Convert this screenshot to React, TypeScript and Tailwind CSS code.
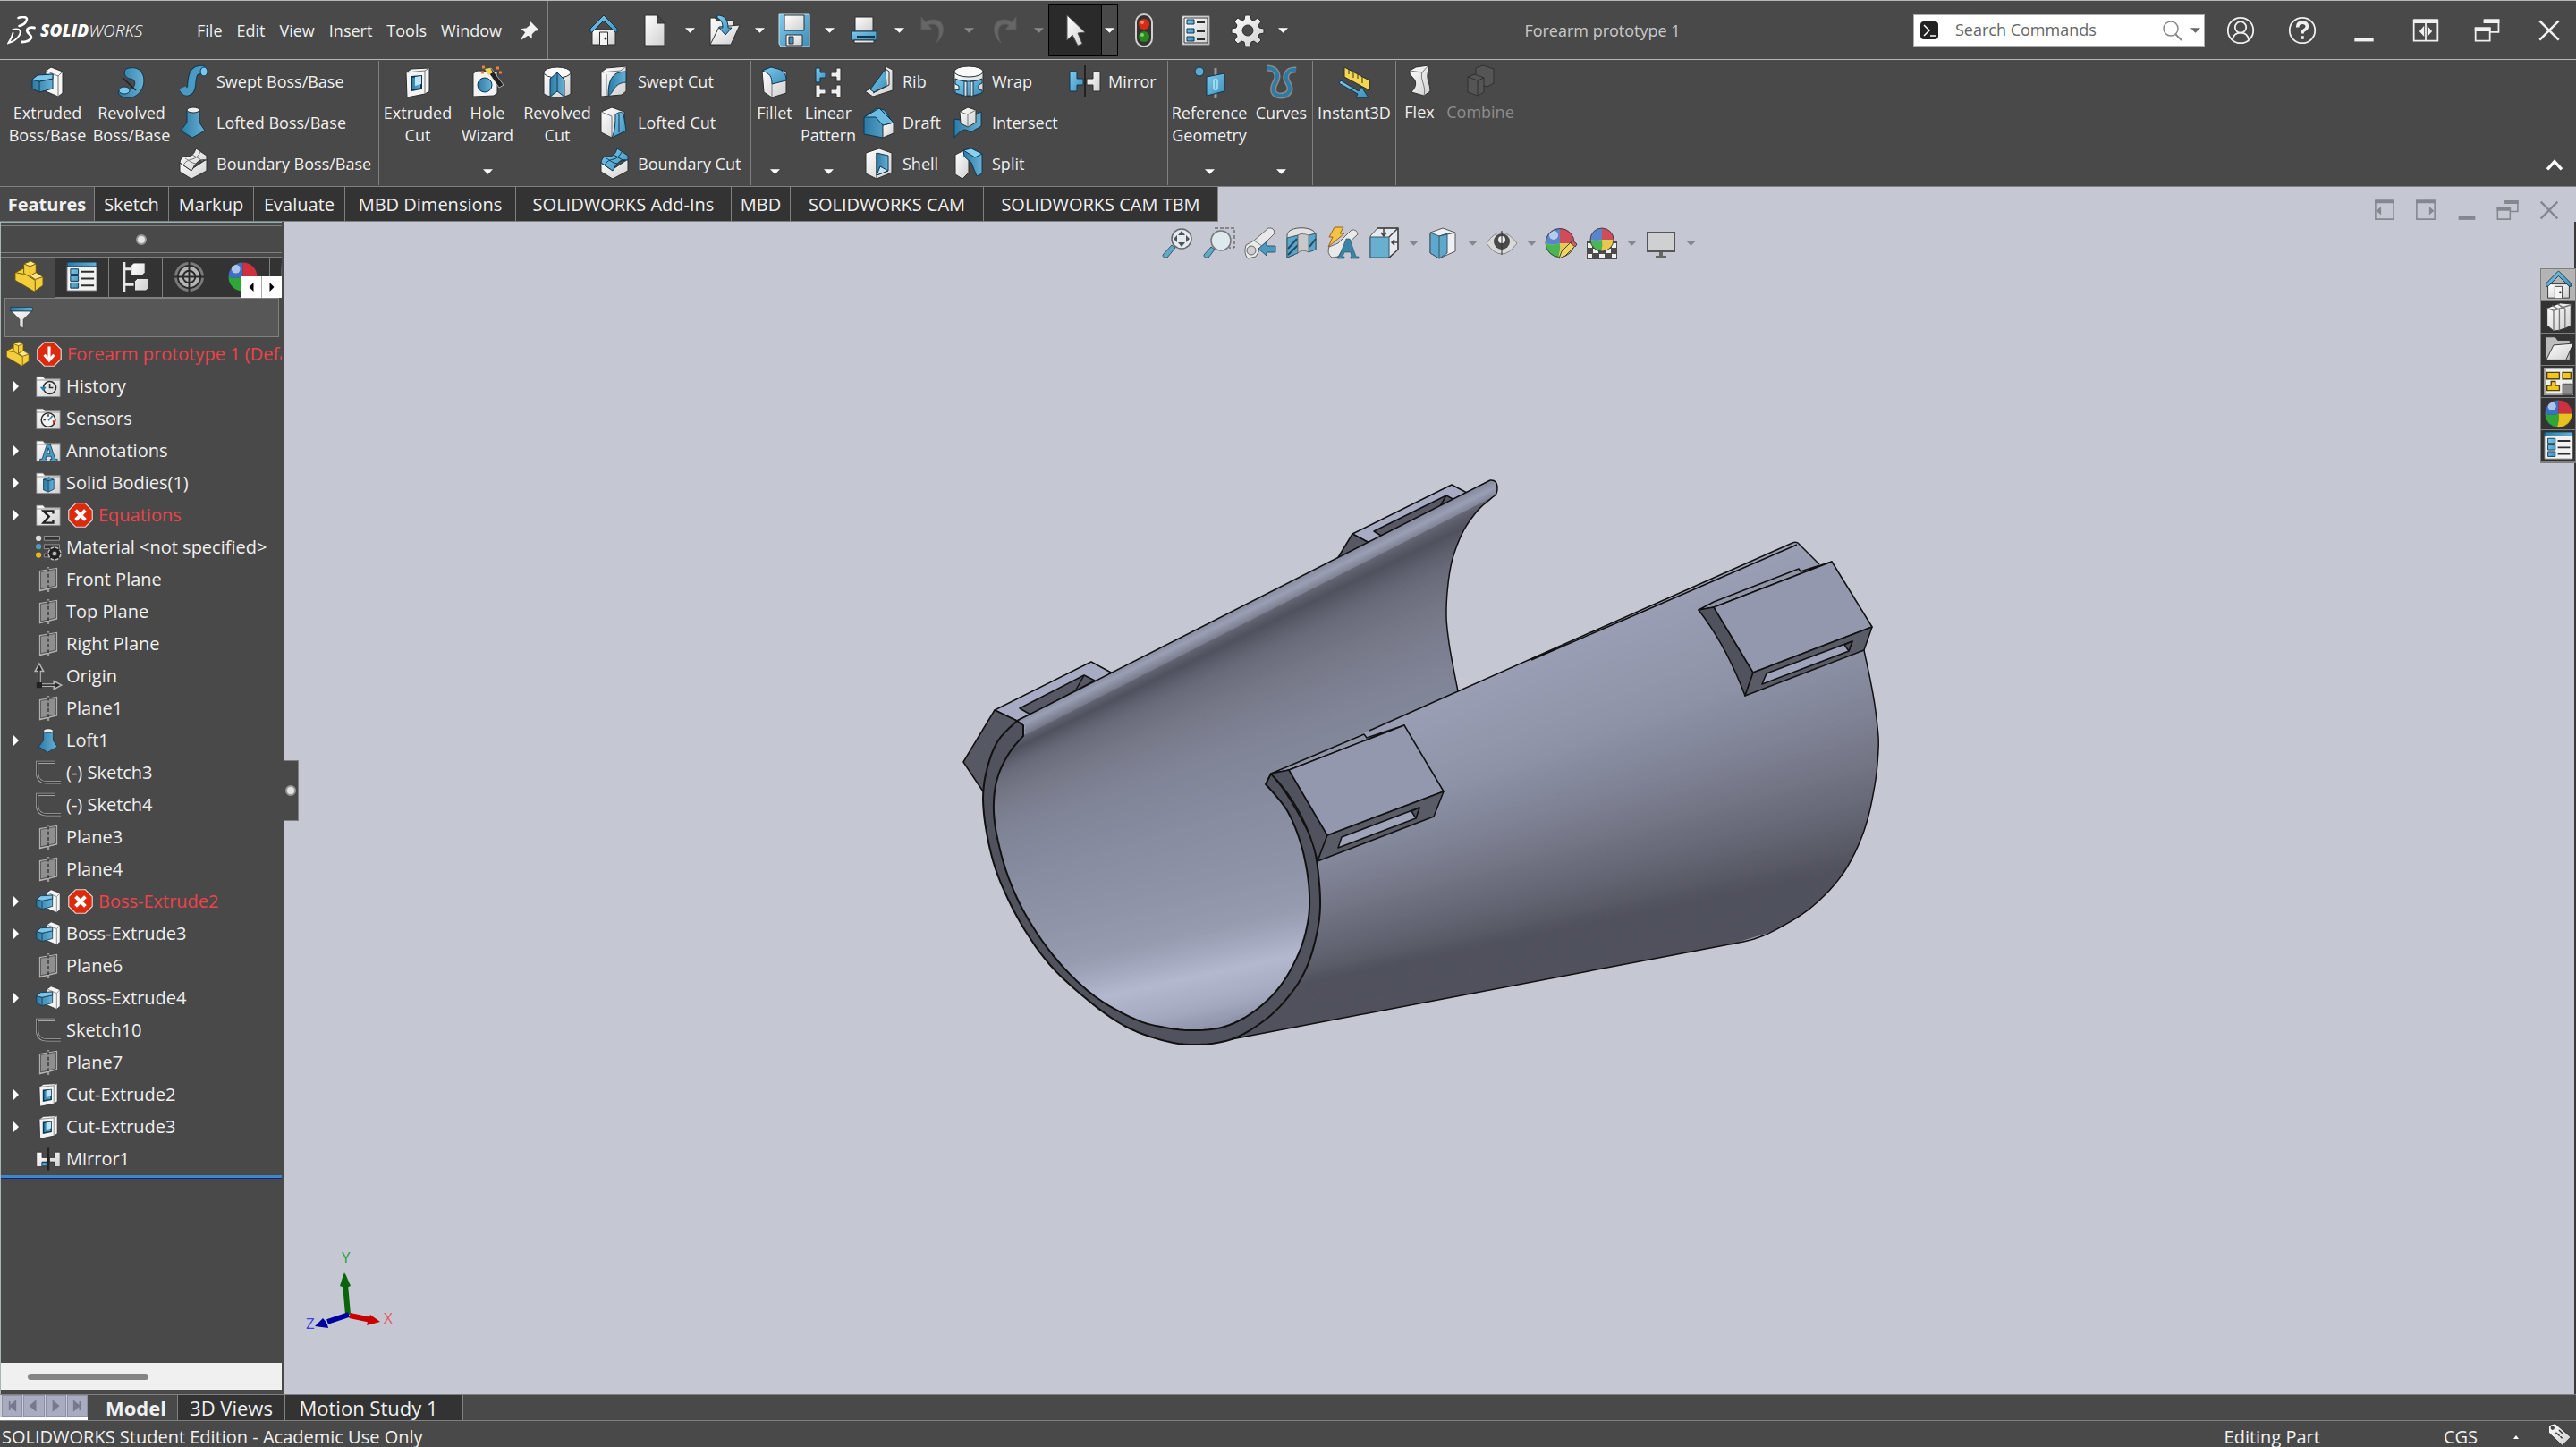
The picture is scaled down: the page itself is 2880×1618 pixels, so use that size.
import React, { ReactNode } from "react";

/* ---------- icon drawings, all on a 36 x 36 grid ---------- */

const W = "url(#white)";
const B = "url(#blue)";
const BD = "url(#blueDeep)";
const NAVY = "#0e3650";
const INK = "#2e2e2e";

const art: Record<string, ReactNode> = {
  home: (
    <>
      <path d="M5 17h26v17H5z" fill={W} stroke={INK} />
      <path d="M18 1 33 16v4h-2L18 7 5 20H3v-4z" fill={B} stroke={NAVY} />
      <path d="M13.500 34V20h9v14" fill="#f4f4f4" stroke={INK} />
      <circle cx="20" cy="27" r="1.500" fill={INK} />
    </>
  ),
  newDoc: <path d="M7 1h14l8 9v25H7zM21 1v9h8" fill={W} stroke={INK} />,
  open: (
    <>
      <path d="M2 4h5l3 3h18v8L16 34H2z" fill={W} stroke={INK} />
      <path d="m12 14 23-2-10 22H2z" fill={W} stroke={INK} />
      <path d="M10 1c8 0 12 5 12 14h4l-7 8-7-8h4c0-6-2-9-6-11z" fill={B} stroke={NAVY} />
    </>
  ),
  save: (
    <>
      <path d="M1 0h34v36H3l-2-3z" fill={B} stroke="#c9dde8" />
      <path d="M7 1h22v17H7z" fill={W} stroke={INK} />
      <path d="M9 23h18v12H9z" fill={W} stroke={INK} />
      <path d="M12 25h5v8h-5z" fill={BD} stroke={INK} />
    </>
  ),
  print: (
    <>
      <path d="M8 3h20v16H8z" fill={W} stroke={INK} />
      <path d="M4 19h28v10H4z" fill={B} stroke={NAVY} />
      <path d="M10 24h20v3H10z" fill={NAVY} />
      <path d="M7 29h22v3H7z" fill={W} stroke={INK} />
    </>
  ),
  undo: <path d="M4 3v14h12l-4-5c10-4 16 5 9 20 12-11 9-27-4-26-4 0-6 1-8 3z" fill="#666" stroke="#5a5a5a" />,
  redo: <path d="M32 3v14H20l4-5c-10-4-16 5-9 20C3 21 6 5 19 6c4 0 6 1 8 3z" fill="#666" stroke="#5a5a5a" />,
  cursor: <path d="M9 1 9 29l6-6 6 12 5-2-5-12 8-1z" fill={W} stroke="#555" />,
  traffic: (
    <>
      <rect x="9" y="0" width="18" height="36" rx="9" fill="#333" stroke="#d0d0d0" strokeWidth="2" />
      <circle cx="18" cy="11" r="6" fill="#d92a12" />
      <circle cx="16" cy="9" r="2" fill="#ff8a70" />
      <circle cx="18" cy="25" r="6" fill="#27881c" />
      <circle cx="16" cy="23" r="2" fill="#7ad36c" />
    </>
  ),
  options: (
    <>
      <path d="M3 2h30v32H3z" fill={W} stroke="#aaa" />
      <path d="M5 4h26v28H5z" fill="none" stroke={INK} />
      <path d="M8 6h8v5H8zM8 16h8v5H8zM8 25h8v5H8z" fill={B} stroke={NAVY} />
      <path d="M19 9h9M19 19h9M19 28h9" stroke={INK} strokeWidth="2" />
    </>
  ),
  gear: (
    <>
      <path
        d="M15 1h6l1 5 3 1 4-3 4 4-3 4 1 3 5 1v5l-5 1-1 3 3 4-4 4-4-3-3 1-1 5h-6l-1-5-3-1-4 3-4-4 3-4-1-3-5-1v-5l5-1 1-3-3-4 4-4 4 3 3-1z"
        fill={W}
        stroke={INK}
      />
      <circle cx="18" cy="18" r="6" fill="#494949" stroke={INK} />
    </>
  ),
  pin: <path d="m20 5 12 12-5 1-6 6 0 6-5-5L4 33l8-12-6-5 7-1 6-5z" fill="#f2f2f2" stroke="#f2f2f2" strokeWidth="2" />,
  extrude: (
    <>
      <path d="m16 5 6-4 13 5v24l-5 4-14-6z" fill="#f5f5f5" stroke={INK} />
      <path d="m16 5 14 6v23M30 11l5-5" fill="none" stroke="#777" />
      <path d="m1 15 6-5 17-1v16L9 29l-8-4z" fill={BD} stroke={NAVY} />
      <path d="m1 15 8 2v12M9 17l15-3" fill="none" stroke={NAVY} />
      <path d="m1 15 6-5 17-1v5L9 17z" fill="#7cc6ea" stroke={NAVY} />
    </>
  ),
  revolve: (
    <>
      <path d="M12 3c22-8 27 22 9 31-7 3-17 1-18-5 2-4 9-6 14-3 7-4 6-12-1-12-5-1-8-7-4-11z" fill={BD} stroke={NAVY} />
      <ellipse cx="10" cy="27" rx="6" ry="4" fill="#7cc6ea" stroke={NAVY} />
      <path d="m8 13 15 14" stroke="#222" strokeWidth="1.500" />
    </>
  ),
  sweep: (
    <>
      <path d="M7 26c3 6 8 4 9-3 1-10 1-20 14-18" fill="none" stroke={NAVY} strokeWidth="10" />
      <path d="M6 25c3 7 9 6 10-2 1-10 1-20 14-18" fill="none" stroke="#4a9ac2" strokeWidth="8" />
      <ellipse cx="30" cy="7" rx="4" ry="5" fill="#7cc6ea" stroke={NAVY} />
    </>
  ),
  loft: (
    <>
      <path d="M11 4v14L4 27l13 8 14-8-6-9V4z" fill={BD} stroke={NAVY} />
      <ellipse cx="18" cy="4" rx="7" ry="3" fill="#eee" stroke={INK} />
    </>
  ),
  boundary: (
    <>
      <path d="m3 17 12 8 18-12v13L16 35 3 27z" fill={W} stroke={INK} />
      <path d="M3 17c1-7 5-7 8-7 6 0 8-3 10-9l12 8v5c-8-1-10 2-12 4-3 3-3 6-5 8z" fill={W} stroke={INK} />
      <path d="M9 12c4 2 6 5 12 6M17 8l12 7M7 20c2-5 6-6 10-7 4-1 7-4 9-8" fill="none" stroke="#777" />
    </>
  ),
  boundaryCut: (
    <>
      <path d="m3 17 12 8 18-12v13L16 35 3 27z" fill={W} stroke={INK} />
      <path d="M3 17c1-7 5-7 8-7 6 0 8-3 10-9l12 8v5c-8-1-10 2-12 4-3 3-3 6-5 8z" fill={B} stroke={NAVY} />
      <path d="M9 12c4 2 6 5 12 6M17 8l12 7M7 20c2-5 6-6 10-7 4-1 7-4 9-8" fill="none" stroke={NAVY} />
    </>
  ),
  cutExtrude: (
    <>
      <path d="m5 7 6-4 20-1v26l-5 3-20 4z" fill="#f4f4f4" stroke={INK} />
      <path d="m5 7 21-2v26M26 5l5-3" fill="none" stroke="#777" />
      <path d="m11 12 11-1v14l-11 2z" fill={BD} stroke={NAVY} strokeWidth="2" />
      <path d="m15 12 7-1v9l-7 2z" fill="#bfe4f5" />
    </>
  ),
  holeWizard: (
    <>
      <path d="m2 8 5-3 22 1v24l-4 3-23 1z" fill="#f4f4f4" stroke={INK} />
      <circle cx="15" cy="21" r="8" fill={BD} stroke={NAVY} />
      <path d="m17 4 5-2 14 19-5 3z" fill="#222" stroke="#ddd" strokeWidth=".7" />
      <path d="m15 3 6-1 3 5-5 3z" fill="#f3d34b" />
      <path d="M12 1h3M28 2h3M31 7h3M11 7h3" stroke="#f0803c" strokeWidth="3" />
    </>
  ),
  revolvedCut: (
    <>
      <path d="M3 6v25c7 5 23 5 30 0V6z" fill={W} stroke={INK} />
      <ellipse cx="18" cy="7" rx="15" ry="6" fill="#fafafa" stroke={INK} />
      <path d="m18 7 8 8v19l-8-6-8 6V14z" fill={BD} stroke={NAVY} />
      <path d="M18 7v21" stroke={NAVY} />
    </>
  ),
  sweptCut: (
    <>
      <path d="m3 8 6-5 22-2v28l-5 4-23 2z" fill={W} stroke={INK} />
      <path d="M3 8l22-2 6-5M9 10v24" fill="none" stroke="#777" />
      <path d="M31 7C17 7 11 14 11 34c7-3 5-14 20-15z" fill={BD} stroke={NAVY} />
    </>
  ),
  loftedCut: (
    <>
      <path d="m3 6 12-5 14 5v22L15 35 3 29z" fill={W} stroke={INK} />
      <path d="m3 6 12 5v24" fill="none" stroke="#777" />
      <path d="M19 9c4-3 7-3 9-1l3 19-16 8c4-8 4-18 4-26z" fill={B} stroke={NAVY} />
      <path d="M23 8v21" stroke={NAVY} />
    </>
  ),
  fillet: (
    <>
      <path d="m4 5 10-4 17 5v24l-16 5-9-6z" fill={W} stroke={INK} />
      <path d="m4 5 10-4 8 2c6 2 9 6 9 13l-16 4c0-8-2-12-11-15z" fill={B} stroke={NAVY} />
      <path d="M15 20v15" stroke="#777" />
    </>
  ),
  linear: (
    <>
      <path d="M4 2h5v5h6v6H9v5H4z" fill={B} stroke={NAVY} />
      <path d="M32 2h-5v5h-6v5h6v5h5zM4 21h5v5h6v5H9v4H4zM32 21h-5v5h-6v5h6v4h5z" fill="#f0f0f0" stroke={INK} />
    </>
  ),
  rib: (
    <>
      <path d="m25 1 8 4v23L11 35l-9-6 20-9z" fill={W} stroke={INK} />
      <path d="m25 4-17 23 4 3 14-7z" fill={B} stroke={NAVY} />
      <path d="m25 4 4 3v15L11 31" fill="none" stroke={INK} />
    </>
  ),
  draft: (
    <>
      <path d="m1 12 14-10 9 2 10 16v10l-12 5L1 31z" fill={BD} stroke={NAVY} />
      <path d="m22 21 12-3v12l-12 5z" fill={W} stroke={INK} />
      <path d="m1 12 17-10 16 16-12 3-8-9z" fill="#6dbbe0" stroke={NAVY} />
    </>
  ),
  shell: (
    <>
      <path d="m3 6 15-5 14 5v22l-17 7-12-6z" fill={W} stroke={INK} />
      <path d="m15 6 13 3v17l-13 5z" fill={BD} stroke={NAVY} />
      <path d="m15 31 4-10 9 5z" fill="#bfe4f5" stroke={NAVY} />
      <path d="M15 6v29" stroke={INK} />
    </>
  ),
  wrap: (
    <>
      <path d="M2 6v24c6 6 26 6 32 0V6z" fill={W} stroke={INK} />
      <ellipse cx="18" cy="7" rx="16" ry="6" fill="#fafafa" stroke={INK} />
      <path d="M3 15c8 4 22 4 30 0v5l-4 2v5l4 1v3l-10 3V18h-3v16h-4V18h-3v16L3 31v-4l4 1v-5l-4-2z" fill={B} stroke={NAVY} />
    </>
  ),
  intersect: (
    <>
      <path d="m2 14 12 2 18-10v16L20 29c-6-6-12-2-18 6z" fill={BD} stroke={NAVY} />
      <path d="m8 6 9-5 9 3v14l-9 5-8-4z" fill={W} stroke={INK} />
      <path d="m8 6 9 3v14M17 9l9-5" fill="none" stroke="#777" />
    </>
  ),
  split: (
    <>
      <path d="m3 8 10-5 5 2v23l-7 7-8-5z" fill={W} stroke={INK} />
      <path d="m12 3 9-2 12 6v22l-6 3-6-15-8-7z" fill={BD} stroke={NAVY} />
      <path d="m12 3 9-2 12 6-8 4z" fill="#8bd0ee" stroke={NAVY} />
    </>
  ),
  mirror: (
    <>
      <path d="M1 7h8v8h7v7H9v7H1z" fill={B} stroke={NAVY} />
      <path d="M35 7h-8v8h-7v7h7v7h8z" fill={W} stroke={INK} />
      <path d="M18 0v36" stroke="#222" strokeWidth="2" />
    </>
  ),
  mirrorTree: (
    <>
      <path d="M1 8h8v8h7v6H9v7H1zM35 8h-8v8h-7v6h7v7h8z" fill={W} stroke={INK} />
      <path d="M9 23h7v5H9z" fill={B} stroke={NAVY} />
      <path d="M18 2v32" stroke="#222" strokeWidth="3" />
    </>
  ),
  refGeo: (
    <>
      <path d="M25 2v34" stroke="#999" strokeWidth="3" />
      <circle cx="7" cy="6" r="5" fill="#5fa9cc" stroke={NAVY} />
      <path d="m15 12 20-4v20l-20 5z" fill={B} stroke={NAVY} />
      <path d="M23 15h4v11h-4z" fill="#5fb4da" stroke="#dff" />
    </>
  ),
  curves: (
    <>
      <path d="M2 2c9 0 14 7 9 16s-2 15 6 15 13-6 8-14-1-16 9-15" fill="none" stroke="#8a8a8a" strokeWidth="7" />
      <path d="M2 2c9 0 14 7 9 16s-2 15 6 15 13-6 8-14-1-16 9-15" fill="none" stroke="#2b7ba6" strokeWidth="4" />
    </>
  ),
  instant3d: (
    <>
      <path d="m7 1 28 15v11L7 12z" fill="#f6d84e" stroke={INK} />
      <path d="M12 4v5M17 6v7M22 9v5M27 12v7" stroke={INK} />
      <path d="m3 16 20 12 3-5 8 12-14 0 2-4L1 19z" fill={B} stroke={NAVY} />
    </>
  ),
  flex: (
    <>
      <path d="M7 6 14 2 28 0c1 6-3 10 0 18 1 4 2 7 2 11l-7 5L9 30c3-4 6-7 4-13C11 13 6 11 7 6z" fill={W} stroke={INK} />
      <path d="m7 6 14 2 7-8M21 8c-3 8 5 15 2 26" fill="none" stroke="#777" />
    </>
  ),
  combine: (
    <g fill="#555" stroke="#303030">
      <path d="m13 3 8-3 12 4v16l-7 4-13-4z" />
      <path d="m4 13 8-3 10 4v16l-7 4-11-4zM4 13l11 4v17M15 17l7-3" />
    </g>
  ),
  zoomFit: (
    <>
      <path d="m1 31 10-11 4 3L6 34q-5 1-5-3z" fill="#64a8c8" stroke="#35566a" />
      <circle cx="22" cy="13" r="11" fill="#e3ebf1" stroke="#666" strokeWidth="1.500" />
      <path d="m22 4 4 5h-8zM22 22l4-5h-8zM13 13l4-4v8zM31 13l-4-4v8z" fill="#4d5357" />
    </>
  ),
  zoomArea: (
    <>
      <path d="M13 1h22v22h-6" fill="none" stroke="#444" strokeDasharray="4 2" />
      <path d="m1 31 8-9 4 3-7 9q-5 1-5-3z" fill="#64a8c8" stroke="#35566a" />
      <circle cx="20" cy="15" r="11" fill="#dde8ef" stroke="#777" strokeWidth="1.500" />
    </>
  ),
  prevView: (
    <>
      <path d="m2 20 9-5L27 1q7-1 7 6L20 21l-7 12-9 2q-5-6-2-15z" fill="#e9e9e9" stroke="#666" />
      <path d="m11 15 9 6" stroke="#888" />
      <circle cx="8" cy="26" r="5" fill="#cfcfcf" stroke="#666" />
      <path d="m16 24 9-8v5h10v7H25v4z" fill="#4a9ac2" stroke="#35566a" />
    </>
  ),
  section: (
    <>
      <path d="M2 9C2-2 34-2 34 9v16l-8 2V12q-8-8-16 0v19l-8 3z" fill="#e2e2e2" stroke="#555" />
      <path d="m2 12 12-3v20L2 34zM26 9l8-2v18l-8 3z" fill="#5aa6ca" stroke="#35566a" />
      <path d="m3 24 10-11M3 31l11-11M27 22l7-9" stroke="#1f4a63" strokeWidth="2" />
      <path d="M14 9q4-3 12 0v19q-7-4-12 1z" fill="#c9c9c9" stroke="#777" />
    </>
  ),
  dynamic: (
    <>
      <path d="m3 22 10-4L28 3q6-1 7 5L20 22l-7 11-7 1q-6-5-3-12z" fill="#e9e9e9" stroke="#666" />
      <path d="M9 0h10l-4 7h5L2 22l5-11H3z" fill="#f3c441" stroke="#9a5f1f" />
      <path d="M22 13h4l7 20h3v2h-9v-2h1l-1-5h-7l-2 5h2v2h-8v-2h2z" fill="#3c83a8" stroke="#1f4a63" strokeWidth=".6" />
    </>
  ),
  orient: (
    <>
      <path d="m3 10 8-9h23v24l-9 9H3z" fill="#e6e9ee" stroke="#555" />
      <path d="M3 11h21v23H3z" fill="#69afd0" stroke="#35566a" />
      <path d="m24 11 10-10M24 34l10-9V1H11M18 1v8m-3-3 3 4 3-4M34 17h-7m3-3-3 3 3 3" fill="none" stroke="#444" strokeWidth="1.500" />
    </>
  ),
  display: (
    <>
      <path d="m4 6 14-5 14 5v21l-18 8L4 29z" fill="#edf1f4" stroke="#555" />
      <path d="m4 6 10 4 9-3v22l-9 6-10-6z" fill="#5fa8cb" stroke="#35566a" />
      <path d="M14 10v25M14 10l18-4" stroke="#35566a" />
    </>
  ),
  eye: (
    <>
      <path d="M1 18q16-24 34 0-17 24-34 0z" fill="#d9d9d9" stroke="#888" />
      <circle cx="18" cy="16" r="9" fill="#4a4a4a" />
      <circle cx="18" cy="14" r="4" fill="#ececec" />
      <path d="M18 4v27" stroke="#333" />
    </>
  ),
  ball: (
    <>
      <path d="M18 18V1A17 17 0 0 0 1 18q8 3 17 0z" fill="#3f6fc4" />
      <path d="M18 18V1a17 17 0 0 1 17 17z" fill="#cf3040" />
      <path d="M18 18q-9 3-17 0a17 17 0 0 0 15 17q3-8 2-17z" fill="#2fa63a" />
      <path d="M18 18h17a17 17 0 0 1-19 17q3-8 2-17z" fill="#e6c11f" />
      <circle cx="10" cy="9" r="5" fill="#dfeaf8" opacity=".7" />
      <circle cx="18" cy="18" r="17" fill="none" stroke="#333" />
    </>
  ),
  ballPencil: (
    <>
      <path d="M17 18V1A16 16 0 0 0 1 18q8 3 16 0z" fill="#5a84cc" />
      <path d="M17 18V1a16 16 0 0 1 16 17z" fill="#d04c5a" />
      <path d="M17 18q-9 3-16 0a16 16 0 0 0 14 16q3-8 2-16z" fill="#4ab653" />
      <path d="M17 18h16a16 16 0 0 1-18 16q3-8 2-16z" fill="#e6c94f" />
      <circle cx="10" cy="9" r="5" fill="#dfeaf8" opacity=".7" />
      <circle cx="17" cy="17.500" r="16" fill="none" stroke="#444" />
      <path d="m16 35 3-8 12-12 5 4-13 13z" fill="#efd660" stroke="#444" />
      <path d="m31 15 5 4-2 3-5-4z" fill="#d9606a" stroke="#444" />
    </>
  ),
  scene: (
    <>
      <path d="M1 16h34v20H1z" fill="#4c4c4c" />
      <path d="M2 18h5v5H2zM8 24h6v5H8zM2 30h5v5H2zM15 30h6v5h-6zM22 24h6v5h-6zM29 18h5v5h-5zM29 30h5v5h-5z" fill="#f0f0f0" />
      <path d="M18 14V1A13 13 0 0 0 5 14q6 2 13 0z" fill="#5a84cc" />
      <path d="M18 14V1a13 13 0 0 1 13 13z" fill="#d04c5a" />
      <path d="M18 14q-7 2-13 0a13 13 0 0 0 12 13q2-6 1-13z" fill="#4ab653" />
      <path d="M18 14h13a13 13 0 0 1-14 13q2-6 1-13z" fill="#e6c94f" />
      <circle cx="18" cy="14" r="13" fill="none" stroke="#444" />
    </>
  ),
  monitor: (
    <>
      <path d="M3 6h30v21H3z" fill="#cfd0d2" stroke="#555" strokeWidth="2" />
      <path d="M16 28h4v4h4v2H12v-2h4z" fill="#666" />
    </>
  ),
  part: (
    <>
      <path d="m3 13 10-5V3l8-3 6 3v10l8 5v10l-10 7L3 22z" fill="#f2cf3a" stroke="#6a5310" />
      <path d="m13 3 7 3 7-3-6-3zM20 6v11l6 4 9-3-8-5-7 4" fill="#fbe884" stroke="#6a5310" />
      <path d="m3 13 10-5v6l13 8v13M3 13l10 2" fill="none" stroke="#6a5310" />
    </>
  ),
  props: (
    <>
      <path d="M1 2h34v32H1z" fill="#f2f2f2" stroke="#777" />
      <path d="M1 1h34v5H1z" fill={BD} stroke={NAVY} />
      <path d="M5 9h9v6H5zM5 17h9v6H5zM5 25h9v6H5z" fill={B} stroke={NAVY} />
      <path d="M17 12h15M17 20h15M17 28h15" stroke={INK} strokeWidth="2" />
    </>
  ),
  config: (
    <>
      <path d="M5 1v34M5 9h8M5 27h11" stroke="#e8e8e8" strokeWidth="3" />
      <path d="m13 5 3-3h13v11l-3 3H13zM17 23l3-3h13v11l-3 3H17z" fill={W} stroke={INK} />
    </>
  ),
  target: (
    <>
      <circle cx="18" cy="18" r="17" fill="#999" opacity=".7" />
      <circle cx="18" cy="18" r="13" fill="#b5b5b5" stroke="#2a2a2a" strokeWidth="2" />
      <circle cx="18" cy="18" r="7" fill="none" stroke="#2a2a2a" strokeWidth="2" />
      <path d="M18 0v36M0 18h36" stroke="#2a2a2a" strokeWidth="2" />
    </>
  ),
  filter: (
    <>
      <path d="M2 8h32L21 21v14l-6-4V21z" fill={W} stroke={INK} />
      <path d="M1 2h34v6H1z" fill={BD} stroke={NAVY} />
    </>
  ),
  folder: <path d="M1 4h9l3 3h22v26H1zM1 9h34" fill={W} stroke="#777" />,
  material: (
    <>
      <path d="M12 2h22v6H12zM12 14h22v6H12zM12 27h12v5H12z" fill="#333" stroke="#aaa" />
      <circle cx="4" cy="5" r="4" fill="#ddd" />
      <circle cx="4" cy="17" r="4" fill="#4a9ac2" />
      <circle cx="4" cy="29" r="4" fill="#e6b81f" />
      <circle cx="27" cy="27" r="7" fill="none" stroke="#bbb" strokeWidth="6" />
      <circle cx="27" cy="27" r="6" fill="none" stroke="#222" strokeWidth="4" />
      <path d="M27 17v20M17 27h20M20 20l14 14M34 20 20 34" stroke="#222" strokeWidth="2" />
      <circle cx="27" cy="27" r="3" fill="#bbb" />
    </>
  ),
  plane: (
    <>
      <path d="M18 0v36" stroke="#999" strokeWidth="3" />
      <path d="m6 6 24-4v26L6 34z" fill="#8f8f8f" stroke="#b5b5b5" strokeWidth="2" />
      <path d="m7 7 22-4v24L7 32z" fill="none" stroke="#444" />
      <path d="M18 2v32" stroke="#222" strokeDasharray="5 3" strokeWidth="1.500" />
    </>
  ),
  origin: (
    <>
      <path d="M5 31V9M5 31h22" stroke="#b5b5b5" strokeWidth="5" />
      <path d="m5 0 6 11H-1zM37 31l-11-6v12z" fill="#2a2a2a" stroke="#b5b5b5" strokeWidth="2" />
      <path d="M5 31V9M5 31h22" stroke="#333" strokeWidth="2" />
      <path d="M1 27h8v8H1z" fill="#222" />
    </>
  ),
  sketch: (
    <>
      <path d="M28 3H2v16q1 13 14 13h20" fill="none" stroke="#a5a5a5" strokeWidth="4" />
      <path d="M28 3H2v16q1 13 14 13h20" fill="none" stroke="#3c3c3c" strokeWidth="2" />
    </>
  ),
  error: (
    <>
      <path d="M11 1h14l10 10v14L25 35H11L1 25V11z" fill="#dd2a0c" stroke="#d8d8d8" strokeWidth="1.500" />
      <path d="m11 11 14 14M25 11 11 25" stroke="#fff" strokeWidth="5" />
    </>
  ),
  errorDown: (
    <>
      <path d="M11 1h14l10 10v14L25 35H11L1 25V11z" fill="#dd2a0c" stroke="#d8d8d8" strokeWidth="1.500" />
      <path d="M18 7v19m-7-7 7 8 7-8" fill="none" stroke="#fff" strokeWidth="4" />
    </>
  ),
  books: (
    <>
      <path d="m4 7 16-6 13 1v27l-8 3-6 2-7 1-8-7z" fill={W} stroke={INK} />
      <path d="M12 10v25M19 9v25M26 8v24M4 7l8 3 21-7M10 4l9 5M17 2l9 6" fill="none" stroke="#777" strokeWidth="1.500" />
    </>
  ),
  folderOpen: (
    <>
      <path d="M2 3h12l3 4h15v24H2z" fill="#bdbdbd" stroke={INK} />
      <path d="m12 13 24-2-9 20H3z" fill={W} stroke={INK} />
    </>
  ),
  palette: (
    <>
      <path d="M1 2h34v32H1z" fill="#efefef" stroke="#999" strokeWidth="2" />
      <path d="M4 7h15v8H4zM23 7h10v8H23zM4 29v-6h5v-5h5v5h5v6z" fill="#f2c61e" stroke="#54420a" strokeWidth="1.500" />
      <path d="M23 21h12v13H23z" fill="#8c8c8c" stroke="#444" />
    </>
  ),
  tag: (
    <>
      <path d="M2 4 12 1l24 21-13 13L2 15z" fill={W} stroke="#222" />
      <path d="m13 15 6 5M18 11l7 7M23 24l-3-3" stroke="#333" strokeWidth="2" />
      <circle cx="8" cy="8" r="3" fill="#444" />
    </>
  ),
  user: (
    <g fill="none" stroke="#f0f0f0" strokeWidth="2">
      <circle cx="18" cy="18" r="16" />
      <circle cx="18" cy="14" r="7" />
      <path d="M8 30q1-9 10-9t10 9" />
    </g>
  ),
  help: (
    <g fill="none" stroke="#f0f0f0">
      <circle cx="18" cy="18" r="16" strokeWidth="2" />
      <path d="M12 14q0-6 6-6t6 5q0 3-4 5-2 1-2 4" strokeWidth="4" />
      <path d="M16 25h4v4h-4z" fill="#f0f0f0" strokeWidth="0" />
    </g>
  ),
  minimize: <path d="M6 27h24v5H6z" fill="currentColor" />,
  span: (
    <>
      <path d="M3 5h30v26H3zM18 8v23" fill="none" stroke="currentColor" strokeWidth="2" />
      <path d="M3 4h30v5H3zM16 12v14l-6-7zM20 12v14l6-7z" fill="currentColor" />
    </>
  ),
  restore: (
    <>
      <path d="M14 5h18v15H22M3 15h18v16H3z" fill="none" stroke="currentColor" strokeWidth="2" />
      <path d="M13 4h20v5H13zM2 14h20v5H2z" fill="currentColor" />
    </>
  ),
  close: <path d="M6 6l24 24M30 6 6 30" stroke="currentColor" strokeWidth="3" />,
  dockLeft: (
    <>
      <path d="M5 5h26v26H5z" fill="none" stroke="currentColor" strokeWidth="2" />
      <path d="M4 3h28v5H4zM13 13v12l-7-6z" fill="currentColor" />
    </>
  ),
  dockRight: (
    <>
      <path d="M5 5h26v26H5z" fill="none" stroke="currentColor" strokeWidth="2" />
      <path d="M4 3h28v5H4zM23 13v12l7-6z" fill="currentColor" />
    </>
  ),
  chevronUp: <path d="m6 26 12-13 12 13" fill="none" stroke="#fff" strokeWidth="5" />,
  clock: (
    <>
      <circle cx="20" cy="20" r="9" fill="none" stroke={INK} strokeWidth="2" />
      <path d="M20 14v6h5" fill="none" stroke={INK} strokeWidth="2" />
      <path d="M6 19h9l-4 6z" fill="#2b7ba6" />
    </>
  ),
  gauge: (
    <>
      <circle cx="18" cy="20" r="10" fill="#f4f4f4" stroke={INK} strokeWidth="2" />
      <path d="m18 21 6-7" stroke="#2b7ba6" strokeWidth="2" />
      <path d="M24 21h4l-3 6z" fill="#d92a12" />
      <path d="M11 20h3M18 12v3" stroke={INK} strokeWidth="2" />
    </>
  ),
  letterA: <path d="M16 9h5l7 21h3v3H21v-3h2l-1-4h-7l-1 4h2v3H6v-3h3zM16 22h5l-3-8z" fill="#4a9ac2" stroke={NAVY} />,
  cube: (
    <>
      <path d="m11 13 8-3 7 3v14l-8 4-7-3z" fill={BD} stroke={NAVY} />
      <path d="m11 13 7 2v16M18 15l8-2" fill="none" stroke={NAVY} />
    </>
  ),
  sigma: <path d="M25 16v-4H11l8 8-8 9h14v-4" fill="none" stroke="#222" strokeWidth="3" />,
};

const folderBadge: Record<string, string> = {
  history: "clock",
  sensors: "gauge",
  annotations: "letterA",
  bodies: "cube",
  equations: "sigma",
};

function Icon({ name, className = "size-9" }: { name: string; className?: string }) {
  const badge = folderBadge[name];
  return (
    <svg viewBox="0 0 36 36" className={`shrink-0 overflow-visible ${className}`} aria-hidden="true">
      {badge ? (
        <>
          {art.folder}
          {art[badge]}
        </>
      ) : (
        art[name]
      )}
    </svg>
  );
}

function SharedPaint() {
  return (
    <svg className="absolute size-0" aria-hidden="true">
      <defs>
        <linearGradient id="white" x1="0" y1="0" x2="1" y2="1">
          <stop offset="0" stopColor="#ffffff" />
          <stop offset="1" stopColor="#cfcfcf" />
        </linearGradient>
        <linearGradient id="blue" x1="0" y1="0" x2="1" y2="1">
          <stop offset="0" stopColor="#82cbee" />
          <stop offset="1" stopColor="#3c8fb9" />
        </linearGradient>
        <linearGradient id="blueDeep" x1="0" y1="0" x2="1" y2="0">
          <stop offset="0" stopColor="#2c7ba5" />
          <stop offset="1" stopColor="#68b0d4" />
        </linearGradient>
      </defs>
    </svg>
  );
}

function Caret({ className = "text-white" }: { className?: string }) {
  return (
    <svg viewBox="0 0 12 6" className={`h-[6px] w-[11px] shrink-0 ${className}`} aria-hidden="true">
      <path d="M0 0h12L6 6z" fill="currentColor" />
    </svg>
  );
}

/* ---------- title bar ---------- */

function Logo() {
  return (
    <div className="flex w-[220px] shrink-0 items-center pl-2 text-white">
      <svg viewBox="0 0 31 32" className="h-8 w-8" aria-hidden="true">
        <g fill="none" stroke="#fff" strokeLinecap="round">
          <path d="M12 2c6-2 11-1 9 3-1 3-4 5-8 6" strokeWidth="2.500" />
          <path d="M6 15c9-2 10 3 6 8-3 4-7 6-11 7 2-3 4-7 5-11" strokeWidth="2" />
          <path d="M30 13c-6-1-9 1-8 4s6 5 4 8-6 4-10 4" strokeWidth="2.800" />
        </g>
      </svg>
      <span className="ml-[5px] font-['Open_Sans'] text-[19px] italic leading-6">
        <b className="font-extrabold">SOLID</b>
        <span className="font-light">WORKS</span>
      </span>
    </div>
  );
}

const quick = [
  { name: "newDoc", label: "New" },
  { name: "open", label: "Open" },
  { name: "save", label: "Save" },
  { name: "print", label: "Print" },
  { name: "undo", label: "Undo", off: true },
  { name: "redo", label: "Redo", off: true },
];

function TitleBar() {
  return (
    <header className="flex h-[67px] shrink-0 items-center border-y border-[#b5b8b8]">
      <div className="flex h-full w-[613px] shrink-0 items-center border-r border-[#808080]">
        <Logo />
        <nav className="flex gap-4 pt-0.5 text-[18px]">
          {["File", "Edit", "View", "Insert", "Tools", "Window"].map((m) => (
            <button key={m}>{m}</button>
          ))}
        </nav>
        <button aria-label="Pin menu" className="mr-2 ml-auto">
          <Icon name="pin" className="size-6" />
        </button>
      </div>
      <div className="ml-[33px] flex h-full shrink-0 items-center">
        <button aria-label="Home" className="flex w-[58px] justify-center">
          <Icon name="home" />
        </button>
        {quick.map((q) => (
          <div key={q.name} className="flex w-[78px] items-center">
            <button aria-label={q.label} disabled={q.off} className="flex w-14 justify-center">
              <Icon name={q.name} />
            </button>
            <button aria-label={`${q.label} options`} disabled={q.off} className="flex w-[22px] justify-center">
              <Caret className={q.off ? "text-[#8a8a8a]" : "text-white"} />
            </button>
          </div>
        ))}
        <div className="flex h-[58px] w-[78px] border border-black bg-[#2a2a2a]">
          <button aria-label="Select" className="flex w-[58px] items-center justify-center">
            <Icon name="cursor" />
          </button>
          <button aria-label="Select options" className="flex flex-1 items-center justify-center border-l border-black bg-[#494949]">
            <Caret />
          </button>
        </div>
        {["traffic", "options", "gear"].map((n) => (
          <button key={n} aria-label={n} className="flex w-[58px] justify-center">
            <Icon name={n} />
          </button>
        ))}
        <button aria-label="Settings menu" className="flex w-5 justify-center">
          <Caret />
        </button>
      </div>
      <h1 className="min-w-0 flex-1 truncate pt-0.5 text-center text-[18px] text-[#c8c8c8]">Forearm prototype 1</h1>
      <label className="flex h-9 w-[326px] shrink-0 items-center border border-[#aaa] bg-white">
        <span className="mx-[7px] flex h-5 w-5 items-center justify-center rounded-sm bg-[#222]">
          <svg viewBox="0 0 20 20" className="size-5" aria-hidden="true">
            <path d="m4 4 6 6-6 6M11 16h6" fill="none" stroke="#fff" strokeWidth="1.500" />
          </svg>
        </span>
        <input
          aria-label="Search Commands"
          placeholder="Search Commands"
          className="ml-3 min-w-0 flex-1 bg-transparent text-[18px] text-[#444] outline-none placeholder:text-[#666]"
        />
        <svg viewBox="0 0 24 24" className="size-6" aria-hidden="true">
          <circle cx="10" cy="10" r="8" fill="none" stroke="#888" strokeWidth="1.500" />
          <path d="m15 16 7 7" stroke="#888" strokeWidth="2" />
        </svg>
        <span className="mr-1 ml-2">
          <Caret className="text-[#666]" />
        </span>
      </label>
      <div className="flex shrink-0 gap-[37px] pr-3.5 pl-6">
        {["user", "help", "minimize", "span", "restore", "close"].map((n) => (
          <button key={n} aria-label={n}>
            <Icon name={n} className="size-8" />
          </button>
        ))}
      </div>
    </header>
  );
}

/* ---------- ribbon ---------- */

function Big({ icon, lines, width, menu, off }: { icon: string; lines: string[]; width: string; menu?: boolean; off?: boolean }) {
  return (
    <button disabled={off} className={`flex shrink-0 flex-col items-center pt-1.5 pb-3 ${width} ${off ? "text-[#8d8d8d]" : ""}`}>
      <Icon name={icon} />
      <span className="mt-1 text-[18px] leading-[25px] whitespace-nowrap">
        {lines.map((l) => (
          <span key={l} className="block">
            {l}
          </span>
        ))}
      </span>
      {menu && (
        <span className="mt-auto">
          <Caret />
        </span>
      )}
    </button>
  );
}

function Stack({ items, width }: { items: [string, string][]; width: string }) {
  return (
    <div className={`flex shrink-0 flex-col ${width}`}>
      {items.map(([icon, label]) => (
        <button key={label} className="flex h-[46px] items-center gap-2 text-[18px] whitespace-nowrap">
          <Icon name={icon} />
          {label}
        </button>
      ))}
    </div>
  );
}

function Group({ children, width }: { children: ReactNode; width: string }) {
  return <div className={`my-px flex shrink-0 border-r border-[#808080] ${width}`}>{children}</div>;
}

function Ribbon() {
  return (
    <section aria-label="Features commands" className="flex h-[142px] shrink-0 border-b border-[#808080]">
      <Group width="w-[424px] pl-1.5">
        <Big icon="extrude" lines={["Extruded", "Boss/Base"]} width="w-[94px]" />
        <Big icon="revolve" lines={["Revolved", "Boss/Base"]} width="w-[94px]" />
        <Stack
          width="ml-1"
          items={[
            ["sweep", "Swept Boss/Base"],
            ["loft", "Lofted Boss/Base"],
            ["boundary", "Boundary Boss/Base"],
          ]}
        />
      </Group>
      <Group width="w-[416px] pl-1">
        <Big icon="cutExtrude" lines={["Extruded", "Cut"]} width="w-[78px]" />
        <Big icon="holeWizard" lines={["Hole", "Wizard"]} width="w-[78px]" menu />
        <Big icon="revolvedCut" lines={["Revolved", "Cut"]} width="w-[78px]" />
        <Stack
          width="ml-[7px]"
          items={[
            ["sweptCut", "Swept Cut"],
            ["loftedCut", "Lofted Cut"],
            ["boundaryCut", "Boundary Cut"],
          ]}
        />
      </Group>
      <Group width="w-[466px] pl-px">
        <Big icon="fillet" lines={["Fillet"]} width="w-[50px]" menu />
        <Big icon="linear" lines={["Linear", "Pattern"]} width="w-[70px]" menu />
        <Stack
          width="ml-1 w-[100px]"
          items={[
            ["rib", "Rib"],
            ["draft", "Draft"],
            ["shell", "Shell"],
          ]}
        />
        <Stack
          width="w-[130px]"
          items={[
            ["wrap", "Wrap"],
            ["intersect", "Intersect"],
            ["split", "Split"],
          ]}
        />
        <Stack width="" items={[["mirror", "Mirror"]]} />
      </Group>
      <Group width="w-[162px]">
        <Big icon="refGeo" lines={["Reference", "Geometry"]} width="w-[92px]" menu />
        <Big icon="curves" lines={["Curves"]} width="w-[69px]" menu />
      </Group>
      <Group width="w-[93px]">
        <Big icon="instant3d" lines={["Instant3D"]} width="w-[92px]" />
      </Group>
      <div className="flex">
        <Big icon="flex" lines={["Flex"]} width="w-[52px]" />
        <Big icon="combine" lines={["Combine"]} width="w-[84px]" off />
      </div>
      <button aria-label="Collapse ribbon" className="mr-3 mb-3 ml-auto self-end">
        <Icon name="chevronUp" className="size-6" />
      </button>
    </section>
  );
}

const tabs: [string, string][] = [
  ["Features", "w-[106px]"],
  ["Sketch", "w-[83px]"],
  ["Markup", "w-[95px]"],
  ["Evaluate", "w-[102px]"],
  ["MBD Dimensions", "w-[191px]"],
  ["SOLIDWORKS Add-Ins", "w-[241px]"],
  ["MBD", "w-[66px]"],
  ["SOLIDWORKS CAM", "w-[216px]"],
  ["SOLIDWORKS CAM TBM", "w-[262px]"],
];

function RibbonTabs() {
  return (
    <div className="flex h-[39px] shrink-0 items-stretch bg-[#c5c8d3]">
      <div role="tablist" className="flex">
        {tabs.map(([t, w], i) => (
          <button
            key={t}
            role="tab"
            aria-selected={i === 0}
            className={`border-r border-b border-[#808080] pt-0.5 text-[20px] whitespace-nowrap ${w} ${i === 0 ? "bg-[#494949] font-bold" : "bg-[#333]"}`}
          >
            {t}
          </button>
        ))}
      </div>
      <div className="ml-auto flex items-center gap-[18px] pt-3 pr-4 text-[#85878f]">
        {["dockLeft", "dockRight", "minimize", "restore", "close"].map((n) => (
          <button key={n} aria-label={`Document ${n}`}>
            <Icon name={n} className="size-7" />
          </button>
        ))}
      </div>
    </div>
  );
}

/* ---------- feature tree ---------- */

type Row = { icon: string; text: string; open?: boolean; error?: boolean };

const rows: Row[] = [
  { icon: "history", text: "History", open: true },
  { icon: "sensors", text: "Sensors" },
  { icon: "annotations", text: "Annotations", open: true },
  { icon: "bodies", text: "Solid Bodies(1)", open: true },
  { icon: "equations", text: "Equations", open: true, error: true },
  { icon: "material", text: "Material <not specified>" },
  { icon: "plane", text: "Front Plane" },
  { icon: "plane", text: "Top Plane" },
  { icon: "plane", text: "Right Plane" },
  { icon: "origin", text: "Origin" },
  { icon: "plane", text: "Plane1" },
  { icon: "loft", text: "Loft1", open: true },
  { icon: "sketch", text: "(-) Sketch3" },
  { icon: "sketch", text: "(-) Sketch4" },
  { icon: "plane", text: "Plane3" },
  { icon: "plane", text: "Plane4" },
  { icon: "extrude", text: "Boss-Extrude2", open: true, error: true },
  { icon: "extrude", text: "Boss-Extrude3", open: true },
  { icon: "plane", text: "Plane6" },
  { icon: "extrude", text: "Boss-Extrude4", open: true },
  { icon: "sketch", text: "Sketch10" },
  { icon: "plane", text: "Plane7" },
  { icon: "cutExtrude", text: "Cut-Extrude2", open: true },
  { icon: "cutExtrude", text: "Cut-Extrude3", open: true },
  { icon: "mirrorTree", text: "Mirror1" },
];

function FeatureTree() {
  return (
    <ul className="text-[20px] whitespace-nowrap">
      <li className="flex h-9 items-center overflow-hidden text-[#f0424a]">
        <Icon name="part" className="ml-1 size-7" />
        <Icon name="errorDown" className="ml-2 size-7" />
        <span className="ml-1.5">Forearm prototype 1 (Default)</span>
      </li>
      {rows.map((r) => (
        <li key={r.text} className="flex h-9 items-center">
          <span className="flex w-[39px] shrink-0 pl-3.5">
            {r.open && (
              <button aria-label={`Expand ${r.text}`}>
                <svg viewBox="0 0 6 12" className="h-3 w-1.5" aria-hidden="true">
                  <path d="M0 0v12l6-6z" fill="#fff" />
                </svg>
              </button>
            )}
          </span>
          <Icon name={r.icon} className="size-7" />
          {r.error && <Icon name="error" className="ml-2 size-7" />}
          <span className={r.error ? "ml-1.5 text-[#f0424a]" : "ml-1.5"}>{r.text}</span>
        </li>
      ))}
    </ul>
  );
}

function Knob() {
  return <span className="block size-3 rounded-full border-2 border-[#999] bg-[#e4e4e4]" />;
}

function SidePanel() {
  return (
    <aside className="relative z-10 flex w-[318px] shrink-0 flex-col border-r border-l border-r-[#808080] border-l-[#a9b3b3] pr-0.5">
      <div className="border-t border-[#8fb0b0] pt-[3px]">
        <div className="flex h-[31px] items-center justify-center border-y border-[#808080]">
          <Knob />
        </div>
      </div>
      <div role="tablist" className="relative mt-1 flex h-[46px] shrink-0 overflow-hidden border-t border-[#808080]">
        {["part", "props", "config", "target", "ball", "props"].map((n, i) => (
          <button
            key={i}
            role="tab"
            aria-label={`Manager ${i + 1}`}
            className={`flex shrink-0 items-center justify-center border-r border-[#808080] pb-0.5 ${i ? "w-[60px] border-b bg-[#333]" : "w-[61px]"}`}
          >
            <Icon name={n} className="size-[35px]" />
          </button>
        ))}
        <div className="absolute right-0 bottom-0 flex h-6 bg-white text-black">
          {["M6 0v12L0 6z", "M0 0v12l6-6z"].map((d) => (
            <button key={d} aria-label="Scroll managers" className="flex w-[23px] items-center justify-center border-l border-[#aaa]">
              <svg viewBox="0 0 6 12" className="h-2.5 w-1.5" aria-hidden="true">
                <path d={d} fill="currentColor" />
              </svg>
            </button>
          ))}
        </div>
      </div>
      <label className="mr-[3px] ml-1 flex h-11 shrink-0 items-center border border-[#808080] bg-[#575757] pl-[5px]">
        <Icon name="filter" className="size-[26px]" />
        <input aria-label="Filter tree" className="ml-2 min-w-0 flex-1 bg-transparent outline-none" />
      </label>
      <div className="min-h-0 flex-1 overflow-hidden pt-px">
        <FeatureTree />
        <div className="h-1 border-b border-[#1a1a9c] bg-[#3a88c4]" />
      </div>
      <div className="flex h-[30px] shrink-0 items-center bg-[#f0f0f0] pl-[30px]">
        <span className="h-[7px] w-[135px] rounded-full bg-[#858585]" />
      </div>
      <div className="mt-0.5 h-[3px] shrink-0 border-t border-[#808080]" />
      <button
        aria-label="Collapse panel"
        className="absolute top-[602px] left-full flex h-[68px] w-[17px] items-center justify-center border border-l-0 border-[#808080] bg-[#494949]"
      >
        <Knob />
      </button>
    </aside>
  );
}

/* ---------- 3D model ---------- */

type P = [number, number];

function spline(pts: P[], steps: number): P[] {
  const out: P[] = [];
  for (let i = 0; i < pts.length - 1; i++) {
    const a = pts[Math.max(0, i - 1)];
    const b = pts[i];
    const c = pts[i + 1];
    const d = pts[Math.min(pts.length - 1, i + 2)];
    for (let s = 0; s < steps; s++) {
      const t = s / steps;
      const f = (k: 0 | 1) =>
        0.5 * (2 * b[k] + (c[k] - a[k]) * t + (2 * a[k] - 5 * b[k] + 4 * c[k] - d[k]) * t * t + (3 * b[k] - a[k] - 3 * c[k] + d[k]) * t * t * t);
      out.push([f(0), f(1)]);
    }
  }
  out.push(pts[pts.length - 1]);
  return out;
}

const str = (pts: P[]) => pts.map((p) => `${p[0].toFixed(1)},${p[1].toFixed(1)}`).join(" ");

function mix(a: string, b: string, t: number) {
  const n = [1, 3, 5].map((i) => {
    const x = parseInt(a.slice(i, i + 2), 16);
    const y = parseInt(b.slice(i, i + 2), 16);
    return Math.round(x + (y - x) * t);
  });
  return `rgb(${n.join(",")})`;
}

function Shaded({ data }: { data: [P, P, string][] }) {
  const steps = 12;
  const front = spline(data.map((d) => d[0]), steps);
  const back = spline(data.map((d) => d[1]), steps);
  return (
    <>
      {front.slice(0, -1).map((f, i) => {
        const seg = Math.floor(i / steps);
        const fill = mix(data[seg][2], data[seg + 1][2], (i % steps) / steps);
        return <polygon key={i} points={str([f, front[i + 1], back[i + 1], back[i]])} fill={fill} stroke={fill} strokeWidth="2" />;
      })}
    </>
  );
}

const innerFront: P[] = [
  [1144, 823], [1129, 841], [1116, 867], [1111, 897], [1114, 932], [1127, 980], [1149, 1027], [1183, 1075], [1224, 1114],
  [1270, 1140], [1303, 1149], [1334, 1152], [1369, 1148], [1402, 1131], [1431, 1103], [1452, 1066], [1462, 1032], [1464, 1001],
  [1460, 967], [1452, 936], [1440, 908], [1425, 888], [1415, 877],
];
const outerFront: P[] = [
  [1421, 865], [1436, 884], [1452, 910], [1465, 936], [1472, 962], [1476, 1006], [1473, 1040], [1462, 1079], [1444, 1110],
  [1415, 1140], [1377, 1162], [1336, 1168], [1299, 1163], [1257, 1147], [1216, 1118], [1174, 1079], [1141, 1032], [1116, 980],
  [1104, 936], [1099, 893], [1104, 858], [1116, 828], [1137, 806],
];
const innerBack: P[] = [[1670, 555], [1651, 572], [1634, 598], [1622, 633], [1617, 680], [1620, 719], [1630, 773]];
const outerBack: P[] = [
  [2084, 727], [2094, 776], [2099, 813], [2100, 838], [2096, 878], [2084, 929], [2061, 976], [2027, 1013], [1990, 1037], [1961, 1050], [1928, 1057],
];

const innerShade: [P, P, string][] = [
  [[1144, 823], [1670, 556], "#686a78"],
  [[1129, 841], [1640, 588], "#50525e"],
  [[1116, 867], [1622, 633], "#696b7a"],
  [[1111, 897], [1617, 685], "#777989"],
  [[1114, 932], [1626, 750], "#808496"],
  [[1127, 980], [1655, 825], "#878ca0"],
  [[1149, 1027], [1695, 895], "#8e92a7"],
  [[1183, 1075], [1740, 945], "#979bb0"],
  [[1205, 1098], [1765, 972], "#a5a9bf"],
  [[1228, 1116], [1785, 995], "#b4b8ce"],
  [[1270, 1140], [1830, 1020], "#a6aac1"],
  [[1303, 1149], [1860, 1032], "#999db4"],
  [[1334, 1152], [1895, 1042], "#9195aa"],
  [[1402, 1131], [1960, 1020], "#9195aa"],
];
const outerShade: [P, P, string][] = [
  [[1421, 865], [2006, 606], "#9b9fb5"],
  [[1436, 884], [2034, 634], "#979bb1"],
  [[1452, 910], [2060, 675], "#9397ac"],
  [[1465, 936], [2080, 717], "#8e92a7"],
  [[1472, 962], [2092, 762], "#85899c"],
  [[1476, 1006], [2100, 828], "#787a8b"],
  [[1473, 1040], [2096, 880], "#6b6d7c"],
  [[1462, 1079], [2084, 929], "#5d5f6b"],
  [[1450, 1102], [2064, 972], "#50525d"],
  [[1415, 1140], [2010, 1027], "#50525d"],
  [[1377, 1163], [1928, 1057], "#50525d"],
];

function Model() {
  const inner = spline(innerFront, 6);
  const outer = spline(outerFront, 6);
  const rearIn = spline(innerBack, 6);
  const rearOut = spline(outerBack, 6);
  const cavity: P[] = [[1144, 815], [1672, 552], ...rearIn, [1531, 817], [1421, 865], ...[...inner].reverse()];
  const cut = outer.findIndex((p) => p[0] === 1377 && p[1] === 1162) + 1;
  const shell: P[] = [[1531, 817], [1630, 773], [2004, 607], [2010, 607], [2033, 631], [2060, 660], ...rearOut, ...outer.slice(0, cut).reverse()];
  return (
    <svg viewBox="1070 520 1050 670" className="h-[670px] w-[1050px]" role="img" aria-label="Forearm prototype model">
      <defs>
        <clipPath id="cavity">
          <polygon points={str(cavity)} />
        </clipPath>
        <clipPath id="shell">
          <polygon points={str(shell)} />
        </clipPath>
        <linearGradient id="rim" gradientUnits="userSpaceOnUse" x1="1400" y1="672" x2="1409" y2="690">
          <stop offset="0" stopColor="#888ca0" />
          <stop offset=".4" stopColor="#9b9fb5" />
          <stop offset="1" stopColor="#757888" />
        </linearGradient>
      </defs>
      <g stroke="#111" strokeWidth="1.500" strokeLinejoin="round">
        <polygon points="1112,794 1220,740 1244,753 1137,806" fill="#a7abc4" />
        <polygon points="1140,792 1212,755 1224,761 1152,799" fill="#565865" />
        <path d="M1212 755 1202 773" />
        <polygon points="1512,597 1623,542 1640,551 1531,607" fill="#a7abc4" />
        <polygon points="1536,594 1617,554 1626,559 1544,599" fill="#565865" />
        <path d="M1617 554 1610 566" />
        <polygon points="1512,597 1495,625 1531,607" fill="#565864" />
        <polygon points="1112,794 1077,852 1099,885 1110,850 1137,806" fill="#565864" />
      </g>
      <g clipPath="url(#cavity)">
        <polygon points={str(cavity)} fill="#9195aa" />
        <Shaded data={innerShade} />
      </g>
      <path d="M1137 806 1666 537q8-1 8 9 0 7-4 9L1146 822q2-12-9-16z" fill="url(#rim)" />
      <path d="M1137 806 1666 537q8-1 8 9 0 7-4 9" fill="none" stroke="#111" strokeWidth="1.500" />
      <polyline points={str(rearIn)} fill="none" stroke="#111" strokeWidth="1.500" />
      <g clipPath="url(#shell)">
        <polygon points={str(shell)} fill="#9195aa" />
        <Shaded data={outerShade} />
      </g>
      <polygon points={str([...outer, [1144, 811], ...inner])} fill="#50525e" stroke="#111" strokeWidth="2" strokeLinejoin="round" />
      <g fill="none" stroke="#111" strokeWidth="1.500" strokeLinejoin="round">
        <path d="M1531 817 1630 773 2004 607q5-2 8 2l22 22M2009 609 1712 738M1377 1162 1928 1057" />
        <polyline points={str(rearOut)} />
      </g>
      <g stroke="#111" strokeWidth="1.500" strokeLinejoin="round">
        <polygon points="1421,865 1525,821 1528,825 1570,811 1441,861" fill="#9195aa" />
        <path d="M1421 865 1441 861 1484 934 1473 963Q1460 905 1421 865z" fill="#50525e" />
        <polygon points="1441,861 1570,811 1614,885 1484,934" fill="#9498ae" />
        <polygon points="1484,934 1614,885 1603,913 1473,963" fill="#595b67" />
        <polygon points="1500,936 1587,903 1583,915 1496,948" fill="#a0a4ba" />
        <polygon points="1578,907 1587,903 1583,915" fill="#50525e" />

        <polygon points="1899,682 1916,673 2011,636 2013,639 2048,628 1916,679" fill="#9195aa" />
        <path d="M1899 682 1916 679 1960 752 1951 778Q1930 722 1899 682z" fill="#50525e" />
        <polygon points="1916,679 2048,628 2093,701 1960,752" fill="#9498ae" />
        <polygon points="1960,752 2093,701 2084,727 1951,778" fill="#595b67" />
        <polygon points="1975,753 2071,717 2067,728 1970,765" fill="#a0a4ba" />
        <polygon points="2062,721 2071,717 2067,728" fill="#50525e" />
      </g>
    </svg>
  );
}

function Triad() {
  return (
    <svg viewBox="340 1395 105 95" className="h-[95px] w-[105px]" role="img" aria-label="Axis triad">
      <path d="M389 1470 386 1436" stroke="#0a640a" strokeWidth="6" />
      <path d="m385 1422 7 16q-6 3-12 0z" fill="#0a640a" />
      <path d="m391 1471 24 5" stroke="#c80000" strokeWidth="6" />
      <path d="m425 1478-15 4q1-6 4-12z" fill="#c80000" />
      <path d="m390 1470-24 8" stroke="#0000a0" strokeWidth="6" />
      <path d="m352 1483 9-9q5 5 6 11z" fill="#0000a0" />
      <g className="font-['Open_Sans'] text-[17px]">
        <text x="382" y="1412" fill="#2f9a3f">Y</text>
        <text x="429" y="1480" fill="#e65a64">X</text>
        <text x="342" y="1486" fill="#4040e6">Z</text>
      </g>
    </svg>
  );
}

const views: [string, boolean][] = [
  ["zoomFit", false], ["zoomArea", false], ["prevView", false], ["section", false], ["dynamic", false],
  ["orient", true], ["display", true], ["eye", true], ["ballPencil", false], ["scene", true], ["monitor", true],
];

function Viewport() {
  return (
    <main className="relative flex min-w-0 flex-1 flex-col border-r-2 border-[#3a3a3a] bg-[#c5c8d3]">
      <div className="flex justify-center pt-1.5 pr-0.5">
        {views.map(([n, menu]) => (
          <div key={n} className="flex items-center">
            <button aria-label={n} className="flex w-[46px] justify-center">
              <Icon name={n} />
            </button>
            {menu && (
              <button aria-label={`${n} options`} className="flex w-5 justify-center">
                <Caret className="text-[#85878f]" />
              </button>
            )}
          </div>
        ))}
      </div>
      <div className="flex flex-1 items-start justify-center pt-[230px] pr-[6px]">
        <Model />
      </div>
      <div className="absolute bottom-[69px] left-[22px]">
        <Triad />
      </div>
      <nav aria-label="Task pane" className="absolute top-[52px] -right-0.5 flex w-10 flex-col border border-[#808080] bg-[#333]">
        {["home", "books", "folderOpen", "palette", "ball", "props"].map((n, i) => (
          <button key={n} aria-label={`Task ${n}`} className={`flex h-9 items-center justify-center border-b border-[#808080] ${i === 0 ? "bg-[#b4b4b4]" : ""}`}>
            <Icon name={n} className="size-[33px]" />
          </button>
        ))}
      </nav>
    </main>
  );
}

/* ---------- bottom bars ---------- */

function BottomTabs() {
  return (
    <div className="flex h-[30px] shrink-0 border-y border-[#808080] text-[22px] leading-7 whitespace-nowrap">
      <div className="flex w-[98px] shrink-0 gap-px border-b-4 border-white bg-[#c9cbd8] pl-0.5 text-[#77798c]">
        {["M8 6v12M16 6v12l-7-6z", "M14 6v12l-7-6z", "M9 6v12l7-6z", "M16 6v12M8 6v12l7-6z"].map((d) => (
          <button key={d} aria-label="Scroll tabs" className="flex flex-1 items-center justify-center border border-[#8e90a6] bg-[#a9abc0]">
            <svg viewBox="0 0 24 24" className="size-5" aria-hidden="true">
              <path d={d} fill="currentColor" stroke="currentColor" strokeWidth="2" />
            </svg>
          </button>
        ))}
      </div>
      <button className="w-[101px] border-r border-[#808080] pl-2 font-bold">Model</button>
      <button className="w-[120px] border-r border-[#808080] bg-[#333]">3D Views</button>
      <button className="w-[199px] border-r border-[#808080] bg-[#333] pr-3">Motion Study 1</button>
    </div>
  );
}

function StatusBar() {
  return (
    <footer className="flex h-[29px] shrink-0 items-start overflow-hidden pr-1.5 pl-0.5 text-[20px] leading-9">
      <span>SOLIDWORKS Student Edition - Academic Use Only</span>
      <span className="mr-[138px] ml-auto">Editing Part</span>
      <button className="mr-10">CGS</button>
      <button aria-label="Unit options" className="mr-8 flex h-9 items-center">
        <svg viewBox="0 0 6 4" className="h-1 w-1.5" aria-hidden="true">
          <path d="M0 4h6L3 0z" fill="#fff" />
        </svg>
      </button>
      <button aria-label="Tags" className="pt-0.5">
        <Icon name="tag" className="size-[26px]" />
      </button>
    </footer>
  );
}

export default function App() {
  return (
    <div className="flex h-screen min-w-0 flex-col overflow-hidden bg-[#494949] font-['Open_Sans','Noto_Sans',sans-serif] text-[#f0f0f0]">
      <SharedPaint />
      <TitleBar />
      <Ribbon />
      <RibbonTabs />
      <div className="flex min-h-0 flex-1">
        <SidePanel />
        <Viewport />
      </div>
      <BottomTabs />
      <StatusBar />
    </div>
  );
}
